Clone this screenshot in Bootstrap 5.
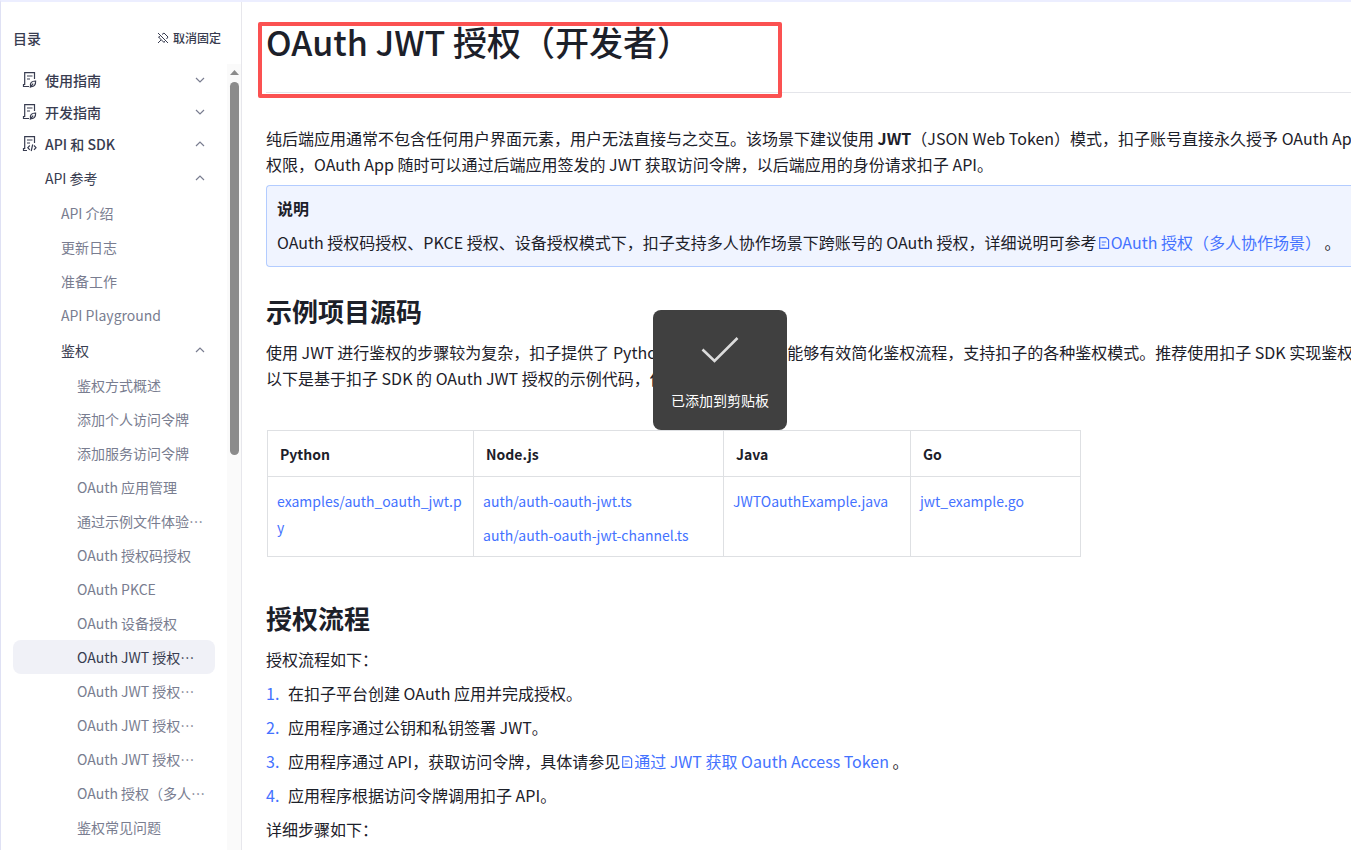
<!DOCTYPE html>
<html lang="zh-CN">
<head>
<meta charset="utf-8">
<meta name="viewport" content="width=device-width, initial-scale=1">
<title>OAuth JWT 授权（开发者）</title>
<link href="https://cdn.jsdelivr.net/npm/bootstrap@5.3.0/dist/css/bootstrap.min.css" rel="stylesheet">
<style>
  :root { --ink: #1c2029; --nav-ink: #383c50; --nav-muted: #797d90; --link: #4472ff; }
  body { font-family: "Noto Sans CJK SC", sans-serif; font-size: 16px; line-height: 26px; color: var(--ink); background: #fff; }
  a { color: var(--link); text-decoration: none; }
  .shell { border-top: 2px solid #eceeff; border-left: 1px solid #dfe1f4; }
  /* sidebar */
  .toc { width: 241px; border-right: 1px solid #e7e7ec; font-size: 14px; color: var(--nav-ink); }
  .toc-head { height: 62px; padding: 10px 20px 0 12px; font-weight: 500; }
  .unpin { font-size: 12px; font-weight: 500; color: inherit; gap: 4px; }
  .toc-list { padding: 0 12px; }
  .toc-row { height: 34px; padding-right: 10px; border-radius: 8px; color: var(--nav-muted); white-space: nowrap; }
  .toc-top { height: 32px; padding-left: 9px; gap: 8px; font-weight: 500; color: var(--nav-ink); }
  .toc-branch { color: var(--nav-ink); }
  .toc-arrow { color: var(--nav-muted); }
  .lv1 { padding-left: 32px; }
  .lv2 { padding-left: 48px; }
  .lv3 { padding-left: 64px; }
  .toc-sub { padding-top: 1px; }
  .toc-row.active { background: #f0f1f7; color: var(--nav-ink); }
  .rail { width: 15px; background: #fafafa; padding-top: 6px; gap: 7px; }
  .rail-thumb { width: 9px; height: 373px; border-radius: 5px; background: #8b8b8b; }
  /* article */
  .doc { padding-left: 24px; }
  .doc p, .doc li, .doc h1, .doc h2 { white-space: nowrap; }
  .doc-title { height: 91px; padding-top: 16px; margin-bottom: 32px; border-bottom: 1px solid #e4e5ea; font-size: 34px; line-height: 48px; font-weight: 500; }
  .title-frame { left: 16px; top: 20px; width: 524px; height: 76px; border: 4px solid #fb5151; border-radius: 2px; }
  .note { margin-top: 8px; padding: 9px 10px 11px; border: 1px solid #b3ccff; border-right: 0; border-radius: 4px 0 0 4px; background: #f0f4ff; }
  .doc h2 { font-size: 26px; line-height: 36px; font-weight: 700; margin: 26px 0 10px; }
  .doc .sdk + h2 { margin-top: 43px; }
  .doc-icon { margin: 0 1px; vertical-align: -1px; }
  .sdk { width: 813px; margin: 39px 0 0 1px; font-size: 14px; line-height: 26px; table-layout: fixed; border-collapse: collapse; }
  .sdk th, .sdk td { border: 1px solid #dee0e3; vertical-align: top; word-break: break-all; }
  .sdk th { padding: 10px 12px 9px; font-weight: 700; }
  .sdk td { padding: 11px 9px 8px; }
  .sdk td a { display: block; margin-bottom: 8px; }
  .sdk td a:last-child { margin-bottom: 0; }
  .steps { list-style: none; counter-reset: step; margin: 8px 0; gap: 8px; }
  .steps li { counter-increment: step; }
  .steps li::before { content: counter(step) "."; display: inline-block; width: 22px; color: var(--link); }
  .copied { left: 387px; top: -29px; width: 134px; height: 120px; border-radius: 8px; background: #404040; color: #fff; font-size: 14px; line-height: 20px; gap: 27px; padding-top: 5px; }
</style>
</head>
<body>
<svg class="d-none" aria-hidden="true">
  <symbol id="down" viewBox="0 0 10 10"><path d="M1 3l4 4 4-4" fill="none" stroke="currentColor" stroke-width="1.200"/></symbol>
  <symbol id="up" viewBox="0 0 10 10"><path d="M1 7l4-4 4 4" fill="none" stroke="currentColor" stroke-width="1.200"/></symbol>
  <symbol id="guide" viewBox="0 0 15 18"><g fill="none" stroke="currentColor" stroke-width="1.200"><path d="M7 15.500H1.500v-2h1.200M2.700 14V1.600h9.800V8M5 5h5.500M5 8h3"/><path d="M8.600 15.500c-1-3.500 1.200-5.600 5-5.500.3 3.800-1.600 6-5 5.500zM7.800 16.500l3.400-3.800"/></g></symbol>
  <symbol id="code" viewBox="0 0 15 18"><g fill="none" stroke="currentColor" stroke-width="1.200"><path d="M5 15.500H1.500v-2h1.200M2.700 14V1.600h9.800V8M5 5h5.500M5 8h3"/><path d="m7.800 10.500-2 2.200 2 2.200M12 10.500l2 2.200-2 2.200M10.700 9.500l-1.500 6.500"/></g></symbol>
  <symbol id="page" viewBox="0 0 12 14"><path d="M1.700 1.600h6.500L10.600 4v8.400H1.700zM3.700 6h4.500M3.700 9h3" fill="none" stroke="currentColor" stroke-width="1.200" stroke-linejoin="round"/></symbol>
</svg>
<div class="shell d-flex vh-100 overflow-hidden">
  <aside class="toc flex-shrink-0 d-flex flex-column">
    <div class="toc-head d-flex justify-content-between align-items-center">
      <span>目录</span>
      <button type="button" class="unpin btn p-0 border-0 d-flex align-items-center">
        <svg width="12" height="12" viewBox="0 0 12 12" fill="none" stroke="currentColor"><path d="m1 1 10 10M5 2.500 7 1l4 4-1.500 2M3 4.500 1.500 5 7 10.500 7.500 9M4 8l-3 3"/></svg>取消固定
      </button>
    </div>
    <div class="d-flex flex-grow-1">
      <nav class="toc-list flex-grow-1" aria-label="目录">
        <a href="#" class="toc-row toc-top d-flex align-items-center"><svg width="15" height="18"><use href="#guide"/></svg><span class="flex-grow-1">使用指南</span><svg class="toc-arrow" width="10" height="10"><use href="#down"/></svg></a>
        <a href="#" class="toc-row toc-top d-flex align-items-center"><svg width="15" height="18"><use href="#guide"/></svg><span class="flex-grow-1">开发指南</span><svg class="toc-arrow" width="10" height="10"><use href="#down"/></svg></a>
        <a href="#" class="toc-row toc-top d-flex align-items-center"><svg width="15" height="18"><use href="#code"/></svg><span class="flex-grow-1">API 和 SDK</span><svg class="toc-arrow" width="10" height="10"><use href="#up"/></svg></a>
        <div class="toc-sub">
          <a href="#" class="toc-row toc-branch lv1 d-flex align-items-center justify-content-between">API 参考<svg class="toc-arrow" width="10" height="10"><use href="#up"/></svg></a>
        </div>
        <div class="toc-sub">
          <a href="#" class="toc-row lv2 d-flex align-items-center">API 介绍</a>
          <a href="#" class="toc-row lv2 d-flex align-items-center">更新日志</a>
          <a href="#" class="toc-row lv2 d-flex align-items-center">准备工作</a>
          <a href="#" class="toc-row lv2 d-flex align-items-center">API Playground</a>
        </div>
        <div class="toc-sub">
          <a href="#" class="toc-row toc-branch lv2 d-flex align-items-center justify-content-between">鉴权<svg class="toc-arrow" width="10" height="10"><use href="#up"/></svg></a>
        </div>
        <div class="toc-sub">
          <a href="#" class="toc-row lv3 d-flex align-items-center">鉴权方式概述</a>
          <a href="#" class="toc-row lv3 d-flex align-items-center">添加个人访问令牌</a>
          <a href="#" class="toc-row lv3 d-flex align-items-center">添加服务访问令牌</a>
          <a href="#" class="toc-row lv3 d-flex align-items-center">OAuth 应用管理</a>
          <a href="#" class="toc-row lv3 d-flex align-items-center">通过示例文件体验…</a>
          <a href="#" class="toc-row lv3 d-flex align-items-center">OAuth 授权码授权</a>
          <a href="#" class="toc-row lv3 d-flex align-items-center">OAuth PKCE</a>
          <a href="#" class="toc-row lv3 d-flex align-items-center">OAuth 设备授权</a>
          <a href="#" class="toc-row lv3 d-flex align-items-center active" aria-current="page">OAuth JWT 授权…</a>
          <a href="#" class="toc-row lv3 d-flex align-items-center">OAuth JWT 授权…</a>
          <a href="#" class="toc-row lv3 d-flex align-items-center">OAuth JWT 授权…</a>
          <a href="#" class="toc-row lv3 d-flex align-items-center">OAuth JWT 授权…</a>
          <a href="#" class="toc-row lv3 d-flex align-items-center">OAuth 授权（多人…</a>
          <a href="#" class="toc-row lv3 d-flex align-items-center">鉴权常见问题</a>
        </div>
      </nav>
      <div class="rail d-flex flex-column align-items-center" aria-hidden="true">
        <svg width="9" height="5" viewBox="0 0 9 5"><path d="M0 5 4.500 0 9 5z" fill="#8b8b8b"/></svg>
        <div class="rail-thumb"></div>
      </div>
    </div>
  </aside>

  <main class="doc flex-grow-1 overflow-hidden position-relative">
    <h1 class="doc-title">OAuth JWT 授权（开发者）</h1>
    <div class="title-frame position-absolute"></div>
    <p class="mb-0">纯后端应用通常不包含任何用户界面元素，用户无法直接与之交互。该场景下建议使用 <b>JWT</b>（JSON Web Token）模式，扣子账号直接永久授予 OAuth App<br>权限，OAuth App 随时可以通过后端应用签发的 JWT 获取访问令牌，以后端应用的身份请求扣子 API。</p>
    <div class="note">
      <p class="mb-2 fw-bold">说明</p>
      <p class="mb-0">OAuth 授权码授权、PKCE 授权、设备授权模式下，扣子支持多人协作场景下跨账号的 OAuth 授权，详细说明可参考<a href="#"><svg class="doc-icon" width="12" height="14"><use href="#page"/></svg>OAuth 授权（多人协作场景）</a> 。</p>
    </div>
    <h2>示例项目源码</h2>
    <div class="position-relative">
      <p class="mb-0">使用 JWT 进行鉴权的步骤较为复杂，扣子提供了 Python、Java 等 SDK，能够有效简化鉴权流程，支持扣子的各种鉴权模式。推荐使用扣子 SDK 实现鉴权<br>以下是基于扣子 SDK 的 OAuth JWT 授权的示例代码，供你参考。</p>
      <div class="copied position-absolute d-flex flex-column align-items-center justify-content-center" role="status">
        <svg width="38" height="27" viewBox="0 0 38 27"><path d="m1.500 13.500 12 11.500 23-23" fill="none" stroke="#dcdcdc" stroke-width="2.600"/></svg>
        <span>已添加到剪贴板</span>
      </div>
    </div>
    <table class="sdk">
      <colgroup><col style="width:206px"><col style="width:250px"><col style="width:187px"><col style="width:170px"></colgroup>
      <thead><tr><th scope="col">Python</th><th scope="col">Node.js</th><th scope="col">Java</th><th scope="col">Go</th></tr></thead>
      <tbody><tr>
        <td><a href="#">examples/auth_oauth_jwt.py</a></td>
        <td><a href="#">auth/auth-oauth-jwt.ts</a><a href="#">auth/auth-oauth-jwt-channel.ts</a></td>
        <td><a href="#">JWTOauthExample.java</a></td>
        <td><a href="#">jwt_example.go</a></td>
      </tr></tbody>
    </table>
    <h2>授权流程</h2>
    <p class="mb-0">授权流程如下：</p>
    <ol class="steps p-0 d-flex flex-column">
      <li>在扣子平台创建 OAuth 应用并完成授权。</li>
      <li>应用程序通过公钥和私钥签署 JWT。</li>
      <li>应用程序通过 API，获取访问令牌，具体请参见<a href="#"><svg class="doc-icon" width="12" height="14"><use href="#page"/></svg>通过 JWT 获取 Oauth Access Token</a> 。</li>
      <li>应用程序根据访问令牌调用扣子 API。</li>
    </ol>
    <p class="mb-0">详细步骤如下：</p>
  </main>
</div>
<script src="https://cdn.jsdelivr.net/npm/bootstrap@5.3.0/dist/js/bootstrap.bundle.min.js"></script>
</body>
</html>
